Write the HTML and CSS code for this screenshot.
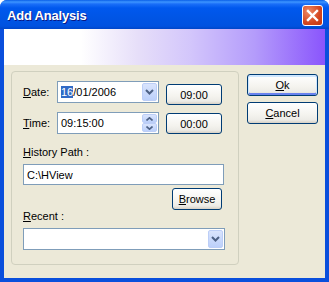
FILE: index.html
```html
<!DOCTYPE html>
<html lang="en">
<head>
    <meta charset="UTF-8">
    <title>Add Analysis</title>
    <link rel="stylesheet" href="styles.css">
</head>
<body>
    <div class="window">
        <div class="titlebar">
            <span class="title">Add Analysis</span>
            <span class="close">
                <svg width="13" height="13" viewBox="0 0 13 13">
                    <path d="M2 2 L11 11 M11 2 L2 11" stroke="#fff" stroke-width="2.4" stroke-linecap="square"/>
                </svg>
            </span>
        </div>
        <div class="client">
            <div class="banner"></div>
            <div class="content">
                <div class="group">
                    <div class="row">
                        <label class="lbl"><u>D</u>ate:</label>
                        <div class="combo date">
                            <span class="value"><span class="sel">16</span>/01/2006</span>
                            <span class="drop">
                                <svg width="9" height="6" viewBox="0 0 9 6"><path d="M1 1 L4.5 4.5 L8 1" fill="none" stroke="#4d6185" stroke-width="2"/></svg>
                            </span>
                        </div>
                        <button class="btn quick first">09:00</button>
                    </div>
                    <div class="row second">
                        <label class="lbl"><u>T</u>ime:</label>
                        <div class="combo date">
                            <span class="value">09:15:00</span>
                            <span class="spin">
                                <span class="half"><svg width="7" height="4" viewBox="0 0 7 4"><path d="M0.5 3.5 L3.5 0.8 L6.5 3.5" fill="none" stroke="#4d6185" stroke-width="1.6"/></svg></span>
                                <span class="half"><svg width="7" height="4" viewBox="0 0 7 4"><path d="M0.5 0.5 L3.5 3.2 L6.5 0.5" fill="none" stroke="#4d6185" stroke-width="1.6"/></svg></span>
                            </span>
                        </div>
                        <button class="btn quick">00:00</button>
                    </div>
                    <label class="caption"><u>H</u>istory Path :</label>
                    <div class="field path">C:\HView</div>
                    <div class="browse-row">
                        <button class="btn browse"><u>B</u>rowse</button>
                    </div>
                    <label class="caption recent-lbl"><u>R</u>ecent :</label>
                    <div class="combo recent">
                        <span class="value"></span>
                        <span class="drop">
                            <svg width="9" height="6" viewBox="0 0 9 6"><path d="M1 1 L4.5 4.5 L8 1" fill="none" stroke="#4d6185" stroke-width="2"/></svg>
                        </span>
                    </div>
                </div>
                <div class="actions">
                    <button class="btn action default"><u>O</u>k</button>
                    <button class="btn action"><u>C</u>ancel</button>
                </div>
            </div>
        </div>
    </div>
</body>
</html>
```

FILE: styles.css
```css
* {
    box-sizing: border-box;
}

body {
    margin: 0;
    font-family: "Liberation Sans", Arial, sans-serif;
    font-size: 11px;
    color: #000;
}

.window {
    width: 329px;
    height: 282px;
    display: flex;
    flex-direction: column;
    background: #0a4fdc;
    border-radius: 7px 7px 0 0;
    overflow: hidden;
}

.titlebar {
    height: 29px;
    display: flex;
    align-items: center;
    justify-content: space-between;
    padding: 0 6px 0 7px;
    background: linear-gradient(to bottom, #0a5fe8 0, #3d95ff 2px, #1a6ef8 4px, #0058ee 8px, #0055e5 60%, #0052e0 90%, #0046c8 100%);
}

.title {
    color: #fff;
    font-weight: bold;
    font-size: 13px;
    letter-spacing: -0.2px;
    text-shadow: 1px 1px 0 #0a1883;
    padding-top: 1px;
}

.close {
    width: 21px;
    height: 21px;
    margin-top: 2px;
    border: 1px solid #fff;
    border-radius: 3px;
    background: radial-gradient(circle at 30% 30%, #ee8a66, #d4461f 60%, #c2350f);
    display: flex;
    align-items: center;
    justify-content: center;
}

.client {
    flex: 1;
    display: flex;
    flex-direction: column;
    margin: 0 4px 4px 4px;
    background: #ece9d8;
}

.banner {
    height: 36px;
    background: linear-gradient(to right, #fff 0%, #fff 24%, #e6def9 42%, #d3c6fb 58%, #b49cfb 78%, #8a55fc 100%);
}

.content {
    flex: 1;
    display: flex;
    align-items: flex-start;
    padding: 6px 0 0 7px;
}

.group {
    width: 228px;
    height: 194px;
    border: 1px solid #d0d0bf;
    border-radius: 4px;
    padding: 9px 0 0 11px;
    display: flex;
    flex-direction: column;
}

.row {
    display: flex;
    align-items: flex-start;
    height: 22px;
}

.row.second {
    margin-top: 9px;
}

.lbl {
    width: 34px;
    line-height: 22px;
}

.combo, .field {
    background: #fff;
    border: 1px solid #7f9db9;
    display: flex;
    align-items: center;
}

.combo.date {
    width: 102px;
    height: 22px;
}

.value {
    flex: 1;
    padding-left: 3px;
    line-height: 14px;
}

.sel {
    background: #316ac5;
    color: #fff;
}

.drop {
    width: 15px;
    height: 18px;
    margin: 1px;
    align-self: flex-start;
    border: 1px solid #bccef7;
    border-radius: 2px;
    background: linear-gradient(to bottom, #d9e4fd, #bcd0fa);
    display: flex;
    align-items: center;
    justify-content: center;
}

.spin {
    width: 15px;
    height: 18px;
    margin: 1px;
    align-self: flex-start;
    display: flex;
    flex-direction: column;
}

.half {
    flex: 1;
    border: 1px solid #bccef7;
    border-radius: 2px;
    background: linear-gradient(to bottom, #d9e4fd, #bcd0fa);
    display: flex;
    align-items: center;
    justify-content: center;
}

.btn {
    font-family: "Liberation Sans", Arial, sans-serif;
    font-size: 11px;
    color: #000;
    border: 1px solid #003c74;
    border-radius: 3px;
    background: linear-gradient(to bottom, #ffffff 0%, #f4f3ee 60%, #ecebe6 85%, #d6d0c5 100%);
    padding: 0;
}

.quick {
    width: 56px;
    height: 21px;
    margin: 3px 0 0 7px;
}

.row.second .quick {
    margin-top: 1px;
}

.caption {
    display: block;
    line-height: 13px;
    margin-top: 12px;
}

.field.path {
    width: 201px;
    height: 21px;
    margin-top: 5px;
    padding-left: 3px;
}

.browse-row {
    width: 199px;
    display: flex;
    justify-content: flex-end;
    margin-top: 3px;
}

.browse {
    width: 50px;
    height: 22px;
}

.caption.recent-lbl {
    margin-top: 0;
}

.combo.recent {
    width: 202px;
    height: 22px;
    margin-top: 5px;
}

.actions {
    display: flex;
    flex-direction: column;
    gap: 6px;
    margin: 3px 0 0 8px;
}

.action {
    width: 71px;
    height: 22px;
}

.default {
    box-shadow: inset 0 1px 0 1px #cee7ff, inset 0 -1px 0 1px #6982ee;
}
```
